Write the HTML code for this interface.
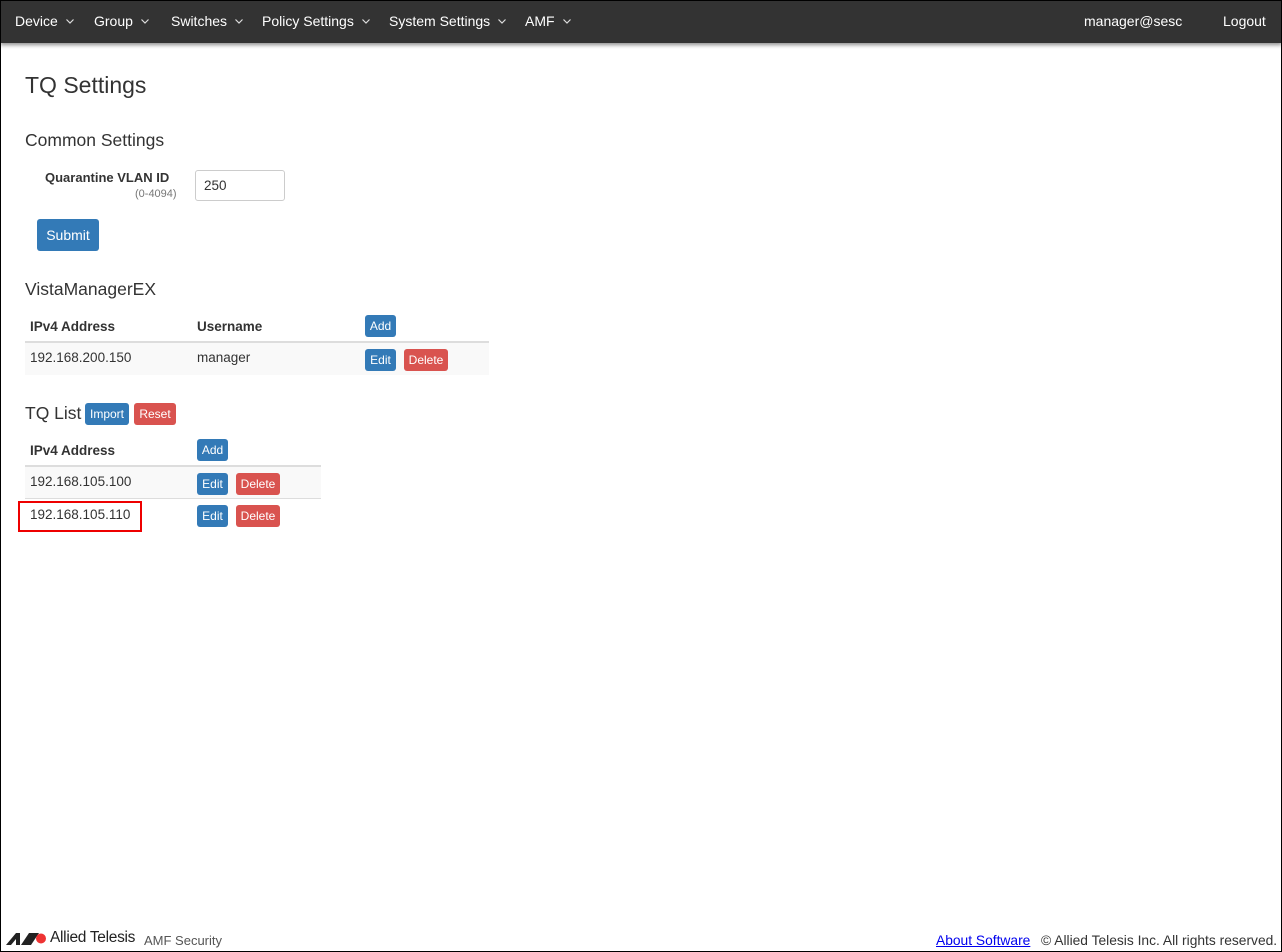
<!DOCTYPE html>
<html><head><meta charset="utf-8"><style>
*{box-sizing:border-box;margin:0;padding:0}
body{width:1282px;height:952px;overflow:hidden;font-family:"Liberation Sans",sans-serif;color:#333;background:#fff;position:relative}
.frame{position:absolute;left:0;top:0;width:1282px;height:952px;border:1px solid #000;pointer-events:none;z-index:9}
.nav{position:absolute;left:0;top:0;width:1282px;height:43px;background:#333;box-shadow:0 2px 4px rgba(0,0,0,.45)}
.nav span{position:absolute;top:13px;color:#fff;font-size:14px;white-space:nowrap}
.nav svg{margin-left:8px;vertical-align:2px}
.a{position:absolute;white-space:nowrap}
.btn{position:absolute;color:#fff;font-size:12px;border-radius:3px;text-align:center}
.b{background:#337ab7}.r{background:#d9534f}
.th{font-weight:bold;font-size:13.5px}
.td{font-size:13.5px}
</style></head><body>
<div class="nav">
<span style="left:15px">Device<svg width="8" height="5" viewBox="0 0 8 5"><path d="M0.5 0.5L4 4L7.5 0.5" stroke="#ddd" fill="none" stroke-width="1.2"/></svg></span>
<span style="left:94px">Group<svg width="8" height="5" viewBox="0 0 8 5"><path d="M0.5 0.5L4 4L7.5 0.5" stroke="#ddd" fill="none" stroke-width="1.2"/></svg></span>
<span style="left:171px">Switches<svg width="8" height="5" viewBox="0 0 8 5"><path d="M0.5 0.5L4 4L7.5 0.5" stroke="#ddd" fill="none" stroke-width="1.2"/></svg></span>
<span style="left:262px">Policy Settings<svg width="8" height="5" viewBox="0 0 8 5"><path d="M0.5 0.5L4 4L7.5 0.5" stroke="#ddd" fill="none" stroke-width="1.2"/></svg></span>
<span style="left:389px">System Settings<svg width="8" height="5" viewBox="0 0 8 5"><path d="M0.5 0.5L4 4L7.5 0.5" stroke="#ddd" fill="none" stroke-width="1.2"/></svg></span>
<span style="left:525px">AMF<svg width="8" height="5" viewBox="0 0 8 5"><path d="M0.5 0.5L4 4L7.5 0.5" stroke="#ddd" fill="none" stroke-width="1.2"/></svg></span>
<span style="left:1084px">manager@sesc</span>
<span style="left:1223px">Logout</span>
</div>
<div class="a" style="left:25px;top:72px;font-size:23px;font-weight:500">TQ Settings</div>
<div class="a" style="left:25px;top:130px;font-size:17.5px">Common Settings</div>
<div class="a" style="left:45px;top:170px;font-size:13px;font-weight:bold">Quarantine VLAN ID</div>
<div class="a" style="left:135px;top:188px;font-size:11px;color:#777">(0-4094)</div>
<div class="a" style="left:195px;top:170px;width:90px;height:31px;border:1px solid #ccc;border-radius:3px;font-size:13.5px;padding:7px 0 0 8px">250</div>
<div class="btn b" style="left:37px;top:219px;width:62px;height:32px;font-size:14px;line-height:32px">Submit</div>
<div class="a" style="left:25px;top:279px;font-size:17.5px">VistaManagerEX</div>
<div class="a th" style="left:30px;top:319px">IPv4 Address</div>
<div class="a th" style="left:197px;top:319px">Username</div>
<div class="btn b" style="left:365px;top:315px;width:31px;height:22px;line-height:22px">Add</div>
<div class="a" style="left:25px;top:341px;width:464px;height:34px;background:#f9f9f9;border-top:2px solid #ddd"></div>
<div class="a td" style="left:30px;top:350px">192.168.200.150</div>
<div class="a td" style="left:197px;top:350px">manager</div>
<div class="btn b" style="left:365px;top:349px;width:31px;height:22px;line-height:22px">Edit</div>
<div class="btn r" style="left:404px;top:349px;width:44px;height:22px;line-height:22px">Delete</div>
<div class="a" style="left:25px;top:403px;font-size:17.5px">TQ List</div>
<div class="btn b" style="left:85px;top:403px;width:44px;height:22px;line-height:22px">Import</div>
<div class="btn r" style="left:134px;top:403px;width:42px;height:22px;line-height:22px">Reset</div>
<div class="a th" style="left:30px;top:443px">IPv4 Address</div>
<div class="btn b" style="left:197px;top:439px;width:31px;height:22px;line-height:22px">Add</div>
<div class="a" style="left:25px;top:465px;width:296px;height:34px;background:#f9f9f9;border-top:2px solid #ddd;border-bottom:1px solid #ddd"></div>
<div class="a td" style="left:30px;top:474px">192.168.105.100</div>
<div class="btn b" style="left:197px;top:473px;width:31px;height:22px;line-height:22px">Edit</div>
<div class="btn r" style="left:236px;top:473px;width:44px;height:22px;line-height:22px">Delete</div>
<div class="a td" style="left:30px;top:507px">192.168.105.110</div>
<div class="btn b" style="left:197px;top:505px;width:31px;height:22px;line-height:22px">Edit</div>
<div class="btn r" style="left:236px;top:505px;width:44px;height:22px;line-height:22px">Delete</div>
<div class="a" style="left:18px;top:501px;width:124px;height:31px;border:2px solid #e00"></div>
<svg class="a" style="left:6px;top:932px" width="42" height="13" viewBox="0 0 42 13"><polygon points="0,13 10,1 14,1 14,13 10,13 10,7 5,13" fill="#222"/><polygon points="15,13 23,1 33,1 25,13" fill="#222"/><circle cx="35" cy="6.5" r="5" fill="#e33"/></svg>
<div class="a" style="left:50px;top:929px;font-size:15.5px;color:#222;letter-spacing:-0.3px">Allied Telesis</div>
<div class="a" style="left:144px;top:933px;font-size:13px;color:#555">AMF Security</div>
<div class="a" style="left:936px;top:933px;font-size:13.8px;color:#00e;text-decoration:underline">About Software</div>
<div class="a" style="left:1041px;top:933px;font-size:13.8px;color:#333">© Allied Telesis Inc. All rights reserved.</div>
<div class="frame"></div>
</body></html>
